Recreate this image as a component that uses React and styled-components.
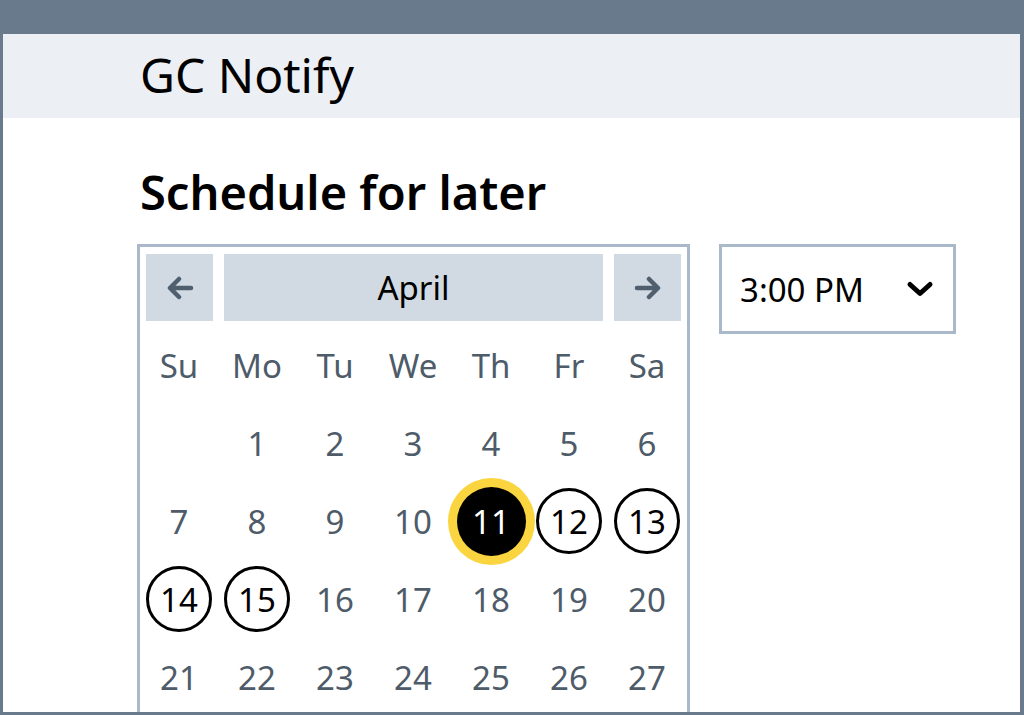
import styled, { createGlobalStyle, css } from "styled-components";

const GlobalStyle = createGlobalStyle`
    html, body {
        margin: 0;
        padding: 0;
        background: #687a8b;
    }
    body {
        font-family: "Noto Sans", "Open Sans", sans-serif;
    }
`

const Frame = styled.div`
    width: 1024px;
    height: 715px;
    box-sizing: border-box;
    padding: 34px 4px 3px 3px;
    background: #687a8b;
`

const Window = styled.div`
    height: 100%;
    background: #fff;
    overflow: hidden;
    display: flex;
    flex-direction: column;
`

const Header = styled.header`
    height: 84px;
    flex-shrink: 0;
    background: #eceff3;
    display: flex;
    align-items: center;
    padding-left: 137px;
`

const Brand = styled.span`
    font-size: 48px;
    color: #000;
    line-height: 1;
    margin-top: -2px;
`

const Main = styled.main`
    padding: 46px 0 0 134px;
`

const Title = styled.h1`
    margin: 0 0 24px 3px;
    font-size: 47px;
    font-weight: 600;
    line-height: 56px;
    color: #000;
`

const Row = styled.div`
    display: flex;
    align-items: flex-start;
    gap: 29px;
`

const Calendar = styled.div`
    width: 553px;
    height: 480px;
    box-sizing: border-box;
    border: 3px solid #a9b9ca;
    border-bottom: none;
`

const NavBar = styled.div`
    display: flex;
    gap: 11px;
    padding: 7px 6px 0 6px;
`

const NavButton = styled.button`
    border: none;
    background: #d1d9e2;
    height: 67px;
    width: ${({wide}) => wide ? "auto" : "67px"};
    flex: ${({wide}) => wide ? 1 : "none"};
    display: flex;
    align-items: center;
    justify-content: center;
    font-family: inherit;
    font-size: 33px;
    color: #000;
    padding: 0;
`

const Grid = styled.div`
    display: grid;
    grid-template-columns: repeat(7, 78px);
    grid-auto-rows: 78px;
    margin-top: 5px;
`

const Cell = styled.div`
    display: flex;
    align-items: center;
    justify-content: center;
    font-size: 33px;
    color: #4e5b69;
`

const Day = styled.span`
    flex: none;
    width: 66px;
    height: 66px;
    box-sizing: border-box;
    border-radius: 50%;
    display: flex;
    align-items: center;
    justify-content: center;
    ${({variant}) => variant === "open" && css`
        border: 3px solid #000;
        color: #000;
    `}
    ${({variant}) => variant === "selected" && css`
        width: 69px;
        height: 69px;
        background: #000;
        color: #fff;
        box-shadow: 0 0 0 9px #fbd540;
    `}
`

const TimeSelect = styled.div`
    width: 237px;
    height: 90px;
    box-sizing: border-box;
    border: 3px solid #a9b9ca;
    display: flex;
    align-items: center;
    justify-content: space-between;
    padding: 0 19px 0 18px;
    font-size: 33px;
    color: #000;
`

const ArrowLeft = () => (
    <svg width="28" height="24" viewBox="0 0 28 24">
        <path d="M25 12H5M13 3l-9 9 9 9" fill="none" stroke="#505f6e" strokeWidth="4.5" strokeLinecap="round" strokeLinejoin="round"/>
    </svg>
)

const ArrowRight = () => (
    <svg width="28" height="24" viewBox="0 0 28 24">
        <path d="M3 12h20M15 3l9 9-9 9" fill="none" stroke="#505f6e" strokeWidth="4.5" strokeLinecap="round" strokeLinejoin="round"/>
    </svg>
)

const Chevron = () => (
    <svg width="28" height="18" viewBox="0 0 28 18">
        <path d="M4 4.5l10 9 10-9" fill="none" stroke="#000" strokeWidth="5" strokeLinecap="round" strokeLinejoin="round"/>
    </svg>
)

const dayNames = ["Su", "Mo", "Tu", "We", "Th", "Fr", "Sa"];

const variantFor = (d) => {
    if (d === 11) return "selected";
    if (d >= 12 && d <= 15) return "open";
    return undefined;
}

const App = () => {
    const days = [null, ...Array.from({length: 27}, (_, i) => i + 1)];

    return (
        <>
            <GlobalStyle/>
            <Frame>
                <Window>
                    <Header>
                        <Brand>GC Notify</Brand>
                    </Header>
                    <Main>
                        <Title>Schedule for later</Title>
                        <Row>
                            <Calendar>
                                <NavBar>
                                    <NavButton aria-label="Previous month"><ArrowLeft/></NavButton>
                                    <NavButton wide>April</NavButton>
                                    <NavButton aria-label="Next month"><ArrowRight/></NavButton>
                                </NavBar>
                                <Grid>
                                    {dayNames.map(n => <Cell key={n}>{n}</Cell>)}
                                    {days.map((d, i) =>
                                        <Cell key={i}>
                                            {d && <Day variant={variantFor(d)}>{d}</Day>}
                                        </Cell>
                                    )}
                                </Grid>
                            </Calendar>
                            <TimeSelect>
                                <span>3:00 PM</span>
                                <Chevron/>
                            </TimeSelect>
                        </Row>
                    </Main>
                </Window>
            </Frame>
        </>
    );
}

export default App;
